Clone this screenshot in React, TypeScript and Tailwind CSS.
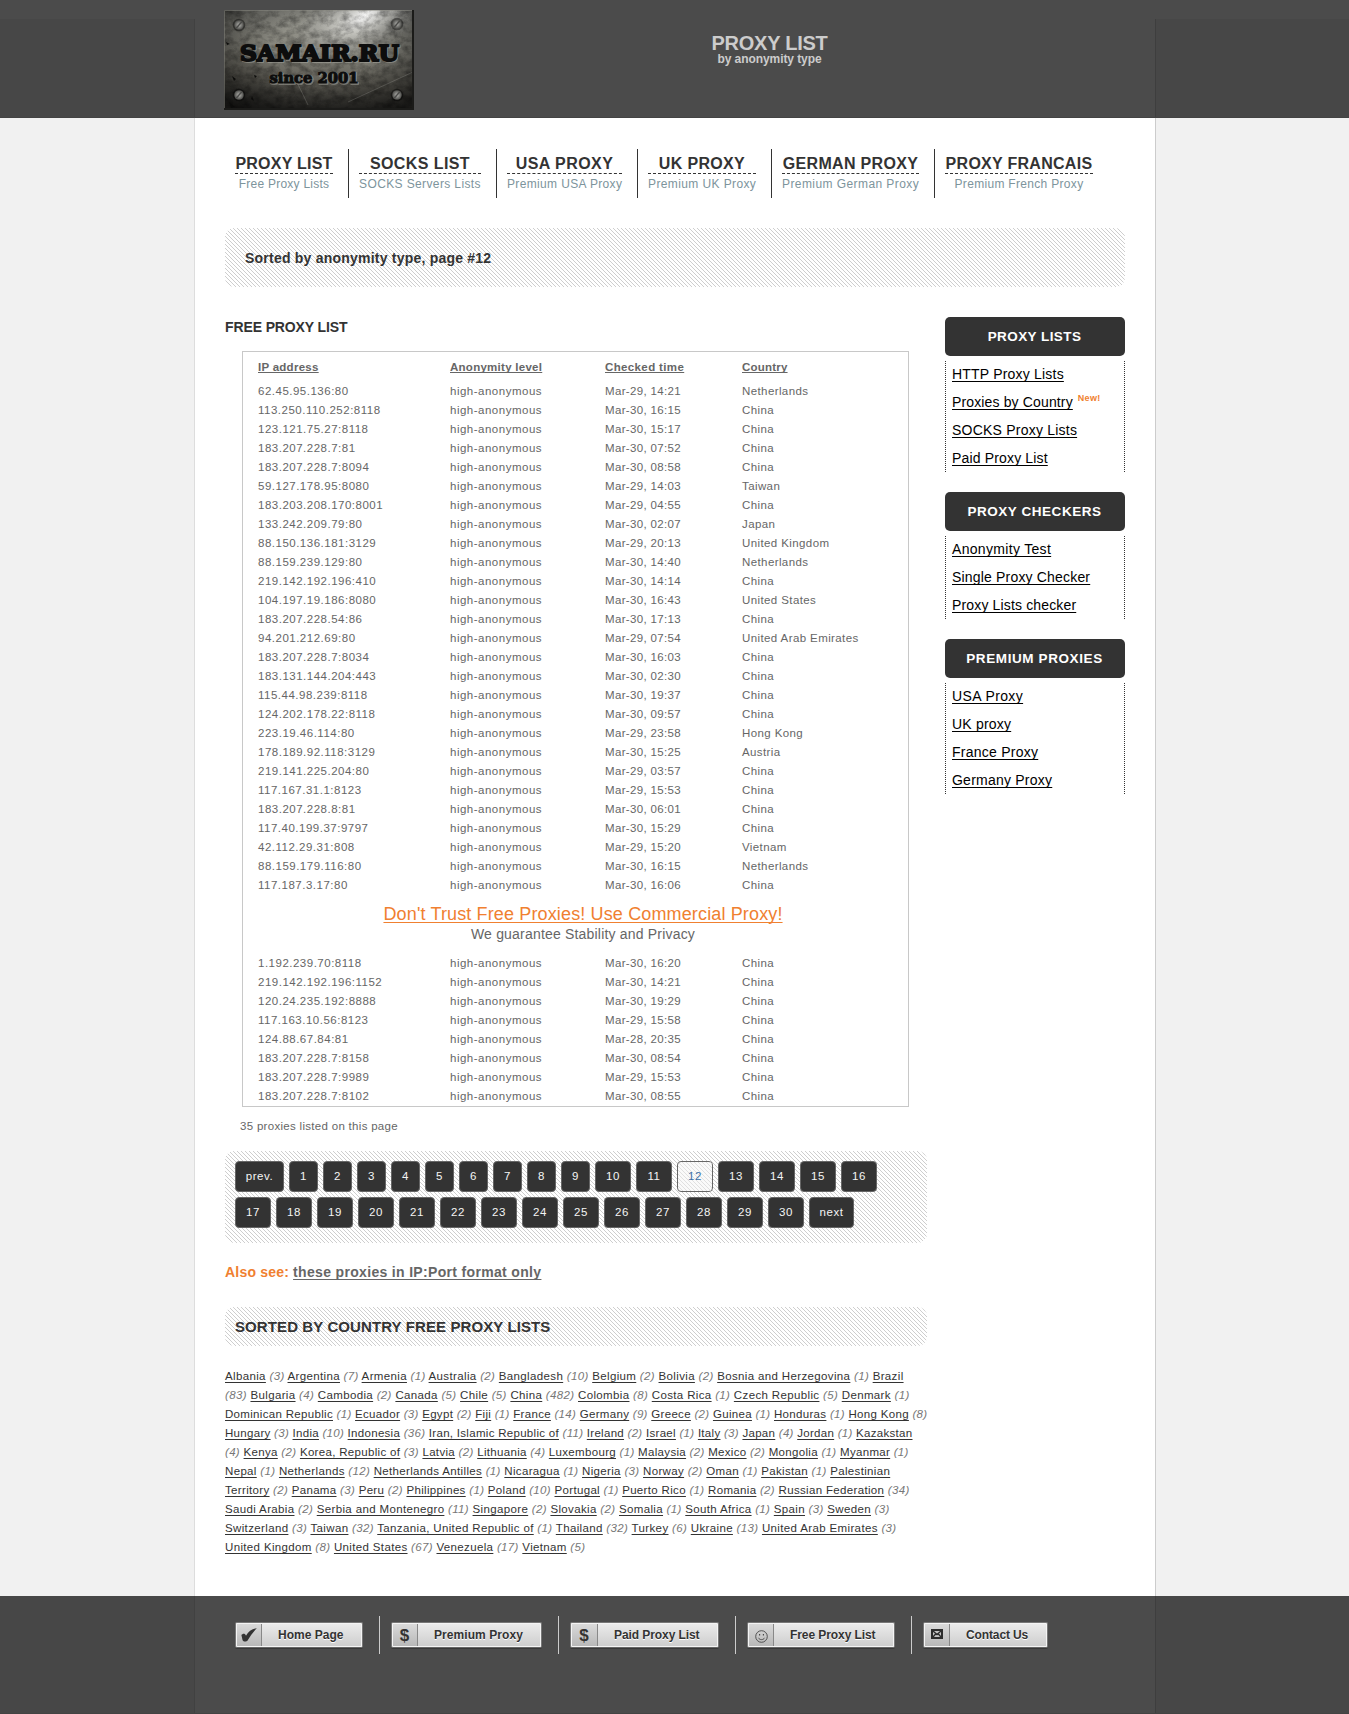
import type { ReactNode } from "react";

const navItems = [
  { title: "PROXY LIST", sub: "Free Proxy Lists", box: "w-[124px] pr-[15px]", t: "tracking-[0.24px]", s: "tracking-[0.24px]" },
  { title: "SOCKS LIST", sub: "SOCKS Servers Lists", box: "w-[148px] pr-[15px]", t: "tracking-[0.41px]", s: "tracking-[0.38px]" },
  { title: "USA PROXY", sub: "Premium USA Proxy", box: "w-[141px] pr-[15px]", t: "tracking-[0.45px]", s: "tracking-[0.35px]" },
  { title: "UK PROXY", sub: "Premium UK Proxy", box: "w-[134px] pr-[15px]", t: "tracking-[0.34px]", s: "tracking-[0.39px]" },
  { title: "GERMAN PROXY", sub: "Premium German Proxy", box: "w-[163px] pr-[15px]", t: "tracking-[0.31px]", s: "tracking-[0.42px]" },
  { title: "PROXY FRANCAIS", sub: "Premium French Proxy", box: "w-[158px] border-r-0", t: "tracking-[0.28px]", s: "tracking-[0.31px]" },
];

const firstRows = `62.45.95.136:80|Mar-29, 14:21|Netherlands
113.250.110.252:8118|Mar-30, 16:15|China
123.121.75.27:8118|Mar-30, 15:17|China
183.207.228.7:81|Mar-30, 07:52|China
183.207.228.7:8094|Mar-30, 08:58|China
59.127.178.95:8080|Mar-29, 14:03|Taiwan
183.203.208.170:8001|Mar-29, 04:55|China
133.242.209.79:80|Mar-30, 02:07|Japan
88.150.136.181:3129|Mar-29, 20:13|United Kingdom
88.159.239.129:80|Mar-30, 14:40|Netherlands
219.142.192.196:410|Mar-30, 14:14|China
104.197.19.186:8080|Mar-30, 16:43|United States
183.207.228.54:86|Mar-30, 17:13|China
94.201.212.69:80|Mar-29, 07:54|United Arab Emirates
183.207.228.7:8034|Mar-30, 16:03|China
183.131.144.204:443|Mar-30, 02:30|China
115.44.98.239:8118|Mar-30, 19:37|China
124.202.178.22:8118|Mar-30, 09:57|China
223.19.46.114:80|Mar-29, 23:58|Hong Kong
178.189.92.118:3129|Mar-30, 15:25|Austria
219.141.225.204:80|Mar-29, 03:57|China
117.167.31.1:8123|Mar-29, 15:53|China
183.207.228.8:81|Mar-30, 06:01|China
117.40.199.37:9797|Mar-30, 15:29|China
42.112.29.31:808|Mar-29, 15:20|Vietnam
88.159.179.116:80|Mar-30, 16:15|Netherlands
117.187.3.17:80|Mar-30, 16:06|China`.split("\n");

const lastRows = `1.192.239.70:8118|Mar-30, 16:20|China
219.142.192.196:1152|Mar-30, 14:21|China
120.24.235.192:8888|Mar-30, 19:29|China
117.163.10.56:8123|Mar-29, 15:58|China
124.88.67.84:81|Mar-28, 20:35|China
183.207.228.7:8158|Mar-30, 08:54|China
183.207.228.7:9989|Mar-29, 15:53|China
183.207.228.7:8102|Mar-30, 08:55|China`.split("\n");

const countryLines = [
  { cls: "tracking-[0.359px]", text: "Albania (3) Argentina (7) Armenia (1) Australia (2) Bangladesh (10) Belgium (2) Bolivia (2) Bosnia and Herzegovina (1) Brazil" },
  { cls: "tracking-[0.36px]", text: "(83) Bulgaria (4) Cambodia (2) Canada (5) Chile (5) China (482) Colombia (8) Costa Rica (1) Czech Republic (5) Denmark (1)" },
  { cls: "tracking-[0.318px]", text: "Dominican Republic (1) Ecuador (3) Egypt (2) Fiji (1) France (14) Germany (9) Greece (2) Guinea (1) Honduras (1) Hong Kong (8)" },
  { cls: "tracking-[0.298px]", text: "Hungary (3) India (10) Indonesia (36) Iran, Islamic Republic of (11) Ireland (2) Israel (1) Italy (3) Japan (4) Jordan (1) Kazakstan" },
  { cls: "tracking-[0.323px]", text: "(4) Kenya (2) Korea, Republic of (3) Latvia (2) Lithuania (4) Luxembourg (1) Malaysia (2) Mexico (2) Mongolia (1) Myanmar (1)" },
  { cls: "tracking-[0.342px]", text: "Nepal (1) Netherlands (12) Netherlands Antilles (1) Nicaragua (1) Nigeria (3) Norway (2) Oman (1) Pakistan (1) Palestinian" },
  { cls: "tracking-[0.334px]", text: "Territory (2) Panama (3) Peru (2) Philippines (1) Poland (10) Portugal (1) Puerto Rico (1) Romania (2) Russian Federation (34)" },
  { cls: "tracking-[0.355px]", text: "Saudi Arabia (2) Serbia and Montenegro (11) Singapore (2) Slovakia (2) Somalia (1) South Africa (1) Spain (3) Sweden (3)" },
  { cls: "tracking-[0.36px]", text: "Switzerland (3) Taiwan (32) Tanzania, United Republic of (1) Thailand (32) Turkey (6) Ukraine (13) United Arab Emirates (3)" },
  { cls: "tracking-[0.35px]", text: "United Kingdom (8) United States (67) Venezuela (17) Vietnam (5)" },
];

const sideMenus = [
  {
    title: "PROXY LISTS",
    cls: "tracking-[0.42px]",
    links: [
      ["HTTP Proxy Lists", "tracking-[0.2px]"],
      ["Proxies by Country", "tracking-[0.14px]"],
      ["SOCKS Proxy Lists", "tracking-[0.22px]"],
      ["Paid Proxy List", "tracking-[0.16px]"],
    ],
  },
  {
    title: "PROXY CHECKERS",
    cls: "tracking-[0.54px]",
    links: [
      ["Anonymity Test", "tracking-[0.32px]"],
      ["Single Proxy Checker", "tracking-[0.18px]"],
      ["Proxy Lists checker", "tracking-[0.15px]"],
    ],
  },
  {
    title: "PREMIUM PROXIES",
    cls: "tracking-[0.6px]",
    links: [
      ["USA Proxy", "tracking-[0.38px]"],
      ["UK proxy", "tracking-[0.2px]"],
      ["France Proxy", "tracking-[0.25px]"],
      ["Germany Proxy", "tracking-[0.23px]"],
    ],
  },
];

function Hatch({ id, color = "#cecece" }: { id: string; color?: string }) {
  return (
    <svg className="absolute inset-0 h-full w-full" shapeRendering="crispEdges" aria-hidden="true">
      <defs>
        <pattern id={id} width="4" height="4" patternUnits="userSpaceOnUse">
          <rect x="0" y="0" width="1" height="1" fill={color} />
          <rect x="1" y="1" width="1" height="1" fill={color} />
          <rect x="2" y="2" width="1" height="1" fill={color} />
          <rect x="3" y="3" width="1" height="1" fill={color} />
        </pattern>
      </defs>
      <rect width="100%" height="100%" fill={`url(#${id})`} />
    </svg>
  );
}

function HatchBox({ id, className, children }: { id: string; className: string; children: ReactNode }) {
  return (
    <div className={`relative overflow-hidden rounded-[9px] ${className}`}>
      <Hatch id={id} />
      <div className="relative">{children}</div>
    </div>
  );
}

function Screw({ x, y }: { x: number; y: number }) {
  return (
    <g transform={`translate(${x} ${y})`}>
      <circle r="6.3" fill="#000" opacity="0.4" />
      <circle r="4.8" fill="url(#screw)" />
      <path d="M-2.8 3.2 2.8-3.2" stroke="#4a4a48" strokeWidth="1.4" />
    </g>
  );
}

function Logo() {
  return (
    <svg width="190" height="100" viewBox="0 0 190 100" className="block">
      <defs>
        <linearGradient id="plate" x1="0.6" y1="0" x2="0.45" y2="1">
          <stop offset="0" stopColor="#a3a39b" />
          <stop offset="0.4" stopColor="#85847b" />
          <stop offset="0.72" stopColor="#615f57" />
          <stop offset="1" stopColor="#3b3a36" />
        </linearGradient>
        <radialGradient id="shine" gradientUnits="userSpaceOnUse" cx="0" cy="0" r="1" gradientTransform="translate(140 6) rotate(155) scale(76 36)">
          <stop offset="0" stopColor="#fff" stopOpacity="0.95" />
          <stop offset="0.4" stopColor="#e4e4e0" stopOpacity="0.55" />
          <stop offset="1" stopColor="#999" stopOpacity="0" />
        </radialGradient>
        <radialGradient id="edge" cx="0.5" cy="0.42" r="0.68">
          <stop offset="0.4" stopColor="#000" stopOpacity="0" />
          <stop offset="1" stopColor="#000" stopOpacity="0.65" />
        </radialGradient>
        <radialGradient id="screw" cx="0.5" cy="0.5" r="0.5">
          <stop offset="0" stopColor="#b4b4b0" />
          <stop offset="1" stopColor="#4c4c49" />
        </radialGradient>
        <filter id="grain" x="0" y="0" width="1" height="1">
          <feTurbulence type="fractalNoise" baseFrequency="0.11 0.14" numOctaves="5" seed="8" />
          <feColorMatrix values="0 0 0 0 0  0 0 0 0 0  0 0 0 0 0  1.6 0 0 0 -0.58" />
        </filter>
      </defs>
      <rect width="190" height="100" fill="url(#plate)" />
      <rect width="190" height="100" fill="url(#edge)" />
      <rect width="190" height="100" fill="url(#shine)" />
      <rect width="190" height="100" filter="url(#grain)" opacity="0.45" />
      <path d="M124 92 189 62M20 35 88 50M70 66 84 95" stroke="#c9c9c2" strokeWidth="0.5" opacity="0.4" />
      <path d="M2 32l4 2-3 1zM8 66l4 3-2 2zM30 65l3 1-2 2zM28 86l2 5-3-2zM5 92l6 5-4 1zM16 30l3 2z" fill="#0c0c0b" />
      <Screw x={15} y={15} />
      <Screw x={173} y={14} />
      <Screw x={15} y={85} />
      <Screw x={173} y={85} />
      <path d="M0.5 99V0.5H189" fill="none" stroke="#8b8b84" opacity="0.5" />
      <path d="M0 99H189V0" fill="none" stroke="#1b1b19" strokeWidth="2" />
      <g fontFamily="'DejaVu Serif', serif" fontWeight="700" strokeLinejoin="round">
        <g fill="#b4b4ac" stroke="#b4b4ac" strokeWidth="2" opacity="0.45">
          <text x="17" y="52" fontSize="23" textLength="159" lengthAdjust="spacingAndGlyphs">SAMAIR.RU</text>
          <text x="46.5" y="74" fontSize="14" textLength="89" lengthAdjust="spacingAndGlyphs">since 2001</text>
        </g>
        <g fill="#0d0d0d" stroke="#0d0d0d">
          <text x="16" y="51" fontSize="23" strokeWidth="2" textLength="159" lengthAdjust="spacingAndGlyphs">SAMAIR.RU</text>
          <text x="45.5" y="73" fontSize="14" strokeWidth="1" textLength="89" lengthAdjust="spacingAndGlyphs">since 2001</text>
        </g>
      </g>
    </svg>
  );
}

function ProxyRow({ row }: { row: string }) {
  const [ip, time, country] = row.split("|");
  return (
    <div className="grid h-[19px] grid-cols-[192px_155px_137px_1fr] pl-[15px]">
      <span className="tracking-[0.5px]">{ip}</span>
      <span className="tracking-[0.5px]">high-anonymous</span>
      <span className="tracking-[0.33px]">{time}</span>
      <span className="tracking-[0.4px]">{country}</span>
    </div>
  );
}

function CountryLine({ text, cls }: { text: string; cls: string }) {
  const parts = text.split(/(\(\d+\))/).filter((p) => p !== "");
  return (
    <div className={`h-[19px] whitespace-pre ${cls}`}>
      {parts.map((p, i) => {
        if (p.startsWith("(")) return <i key={i} className="text-[#777]">{p}</i>;
        const lead = p.startsWith(" ") ? " " : "";
        const trail = p.endsWith(" ") ? " " : "";
        const name = p.trim();
        return (
          <span key={i}>
            {lead}
            {name && <a className="text-[#333] underline decoration-1 underline-offset-2 [text-decoration-skip-ink:none]">{name}</a>}
            {name ? trail : ""}
          </span>
        );
      })}
    </div>
  );
}

function PageButton({ label }: { label: string }) {
  const wide = label === "prev." ? "w-[49px]" : label === "next" ? "w-[45px]" : label.length > 1 ? "w-9" : "w-[29px]";
  const current = label === "12";
  return (
    <a
      className={`relative flex h-[31px] items-center justify-center overflow-hidden rounded-[4px] border border-[#666] tracking-[0.55px] ${wide} ${
        current ? "bg-[#fafafa] text-[#3a6ea5]" : "bg-[#333] text-[#f5f5f5]"
      }`}
    >
      {current && <Hatch id="hatch-current" color="#e0e0e0" />}
      <span className="relative">{label}</span>
    </a>
  );
}

function FooterButton({ icon, label, width, cell, cls }: { icon: ReactNode; label: string; width: string; cell: string; cls: string }) {
  return (
    <a className={`mt-[6px] flex h-[26px] rounded-[2px] border border-[#777] border-b-[#666] bg-[#f4f4f4] p-px shadow-[0_1px_0_#383838] ${width}`}>
      <span className={`flex items-center justify-center border-r border-[#888] bg-linear-to-b from-[#dadada] to-[#b8b8b8] text-[#333] ${cell}`}>{icon}</span>
      <span className="flex-1 bg-linear-to-b from-[#ebebeb] to-[#cecece]">
        <span className={`block pl-4 text-[12px] leading-[22px] font-bold whitespace-nowrap text-[#333] [text-shadow:0_1px_0_#fff] ${cls}`}>{label}</span>
      </span>
    </a>
  );
}

const check = (
  <svg width="16" height="14" viewBox="0 0 16 15" preserveAspectRatio="none" className="-mt-px mr-px">
    <path d="M0.4 7.6C1.6 6 3.8 5.2 5 8.2 7.4 4 10.6 1 15.8 0.2 12 4.4 9 9.4 6.6 13.4 5.4 15 2.4 15 1.6 13.2Z" fill="#333" />
  </svg>
);

const dollar = <span className="mr-px text-[17px] leading-none font-bold">$</span>;

const smile = (
  <svg width="13" height="13" viewBox="0 0 13 13" fill="none" stroke="#444" strokeWidth="0.9" className="mt-[2px]">
    <circle cx="6.5" cy="6.5" r="5.8" />
    <path d="M3.5 7.8C4.4 10.2 8.6 10.2 9.5 7.8" />
    <path d="M4.6 4v1.6M8.4 4v1.6" strokeWidth="1.1" />
  </svg>
);

const mail = (
  <svg width="12" height="10" viewBox="0 0 12 10" className="-mt-[2px] mr-px">
    <rect width="12" height="10" fill="#2c2c2c" />
    <rect x="2" y="2" width="8" height="6" fill="#c4c4c4" />
    <path d="M2 2 6 5.6 10 2M2 8 4.8 4.8M10 8 7.2 4.8" stroke="#2c2c2c" strokeWidth="1.3" fill="none" />
  </svg>
);

const pagesTop = ["prev.", ...Array.from({ length: 16 }, (_, i) => String(i + 1))];
const pagesBottom = [...Array.from({ length: 14 }, (_, i) => String(i + 17)), "next"];

export default function App() {
  return (
    <div className="flex h-[1714px] w-[1349px] flex-col overflow-hidden bg-[#f1f1f1] font-['Liberation_Sans',Arial,sans-serif] text-[11.5px] leading-[19px] text-[#666]">
      <header className="flex h-[118px] border-b border-[#434343] bg-[#4b4b4b]">
        <div className="mt-[19px] w-[195px] border-r border-[#414141] bg-[#474747]" />
        <div className="flex w-[960px] pl-[29px]">
          <div className="mt-[10px] h-[100px] w-[190px]">
            <Logo />
          </div>
          <div className="mt-[30px] w-[711px] text-center font-bold text-[#ccc]">
            <div className="text-[20px] leading-[26px] tracking-[-0.25px]">PROXY LIST</div>
            <div className="-mt-1 text-[12px] leading-[14px] tracking-[-0.08px]">by anonymity type</div>
          </div>
        </div>
        <div className="mt-[19px] flex-1 border-l border-[#3e3e3e] bg-[#474747]" />
      </header>

      <main className="ml-[194px] h-[1478px] w-[962px] border-r border-l border-r-[#ccc] border-l-[#ddd] bg-white px-[30px]">
        <nav className="flex pt-[31px]">
          {navItems.map((n) => (
            <a key={n.title} className={`h-[49px] border-r border-[#333] pl-[10px] text-center whitespace-nowrap ${n.box}`}>
              <span className={`block h-[25px] border-b border-dashed border-[#333] pt-[5px] text-[16px] leading-[19px] font-bold text-[#333] ${n.t}`}>{n.title}</span>
              <span className={`mt-px block text-[12px] leading-[19px] text-[#7d949c] ${n.s}`}>{n.sub}</span>
            </a>
          ))}
        </nav>

        <HatchBox id="hatch-top" className="mt-[30px] h-[59px]">
          <h1 className="pt-[19px] pl-5 text-[14px] leading-[22px] font-bold tracking-[0.22px] text-[#333]">Sorted by anonymity type, page #12</h1>
        </HatchBox>

        <div className="flex justify-between pt-[30px]">
          <section className="w-[702px]">
            <h2 className="text-[14px] leading-[20px] font-bold tracking-[-0.12px] text-[#333]">FREE PROXY LIST</h2>
            <div className="mt-[14px] ml-[17px] w-[667px] border border-[#c8c8c8]">
              <div className="grid h-[30px] grid-cols-[192px_155px_137px_1fr] pt-[6px] pl-[15px] font-bold underline decoration-1 underline-offset-1 [text-decoration-skip-ink:none]">
                <span className="tracking-[0.27px]">IP address</span>
                <span className="tracking-[0.27px]">Anonymity level</span>
                <span className="tracking-[0.37px]">Checked time</span>
                <span className="tracking-[0.21px]">Country</span>
              </div>
              {firstRows.map((r) => <ProxyRow key={r} row={r} />)}
              <div className="h-[59px] pt-[7px] pl-[15px] text-center">
                <div className="text-[18px] leading-6 tracking-[0.14px] text-[#f08030] underline decoration-1 underline-offset-2 [text-decoration-skip-ink:none]">Don't Trust Free Proxies! Use Commercial Proxy!</div>
                <div className="text-[14px] leading-4 tracking-[0.19px]">We guarantee Stability and Privacy</div>
              </div>
              {lastRows.map((r) => <ProxyRow key={r} row={r} />)}
            </div>
            <p className="mt-[10px] pl-[15px] tracking-[0.3px]">35 proxies listed on this page</p>

            <HatchBox id="hatch-pages" className="mt-[15px] h-[92px]">
              <div className="flex flex-col gap-[5px] pt-[10px] pl-[10px]">
                <div className="flex gap-[5px]">{pagesTop.map((p) => <PageButton key={p} label={p} />)}</div>
                <div className="flex gap-[5px]">{pagesBottom.map((p) => <PageButton key={p} label={p} />)}</div>
              </div>
            </HatchBox>

            <p className="mt-[20px] flex gap-[4px] text-[14px] leading-[18px] font-bold tracking-[0.33px] whitespace-nowrap">
              <span className="tracking-[0.2px] text-[#f08030]">Also see:</span>
              <a className="underline decoration-1 underline-offset-2 [text-decoration-skip-ink:none]">these proxies in IP:Port format only</a>
            </p>

            <HatchBox id="hatch-country" className="mt-[26px] h-[39px]">
              <h2 className="pl-[10px] text-[15px] leading-[39px] font-bold tracking-[0.1px] text-[#333]">SORTED BY COUNTRY FREE PROXY LISTS</h2>
            </HatchBox>

            <div className="mt-[21px]">
              {countryLines.map((l) => <CountryLine key={l.text} text={l.text} cls={l.cls} />)}
            </div>
          </section>

          <aside className="flex w-[180px] flex-col gap-[20px]">
            {sideMenus.map((m) => (
              <div key={m.title}>
                <h3 className={`h-[39px] rounded-[5px] bg-[#333] pr-px text-center text-[13.5px] leading-[40px] font-bold text-white ${m.cls}`}>{m.title}</h3>
                <ul className="mt-[5px] border-r border-l border-dotted border-[#333] pl-[6px]">
                  {m.links.map(([label, cls]) => (
                    <li key={label} className="flex h-7 text-[14px] leading-[26px] whitespace-nowrap text-black last:h-[27px]">
                      <a className={`underline decoration-1 underline-offset-2 [text-decoration-skip-ink:none] ${cls}`}>{label}</a>
                      {label === "Proxies by Country" && <span className="ml-[5px] text-[9px] leading-[18px] font-bold tracking-[0.3px] text-[#f08030]">New!</span>}
                    </li>
                  ))}
                </ul>
              </div>
            ))}
          </aside>
        </div>
      </main>

      <footer className="flex h-[118px] border-b border-[#434343] bg-[#4b4b4b]">
        <div className="w-[195px] border-r border-[#414141] bg-[#474747]" />
        <div className="flex w-[960px] items-start pt-5 pl-[30px]">
          <div className="h-[38px] border-r border-[#ccc] pr-4 pl-[10px]">
            <FooterButton icon={check} label="Home Page" width="w-[128px]" cell="w-[25px]" cls="tracking-[0.02px]" />
          </div>
          <div className="h-[38px] border-r border-[#ccc] pr-4 pl-[11px]">
            <FooterButton icon={dollar} label="Premium Proxy" width="w-[151px]" cell="w-[25px]" cls="tracking-[0.07px]" />
          </div>
          <div className="h-[38px] border-r border-[#ccc] pr-4 pl-[11px]">
            <FooterButton icon={dollar} label="Paid Proxy List" width="w-[149px]" cell="w-[26px]" cls="tracking-[-0.08px]" />
          </div>
          <div className="h-[38px] border-r border-[#ccc] pr-4 pl-[11px]">
            <FooterButton icon={smile} label="Free Proxy List" width="w-[148px]" cell="w-[25px]" cls="tracking-[-0.08px]" />
          </div>
          <div className="h-[38px] pl-[11px]">
            <FooterButton icon={mail} label="Contact Us" width="w-[125px]" cell="w-[25px]" cls="tracking-[-0.12px]" />
          </div>
        </div>
        <div className="flex-1 border-l border-[#3e3e3e] bg-[#474747]" />
      </footer>
    </div>
  );
}
